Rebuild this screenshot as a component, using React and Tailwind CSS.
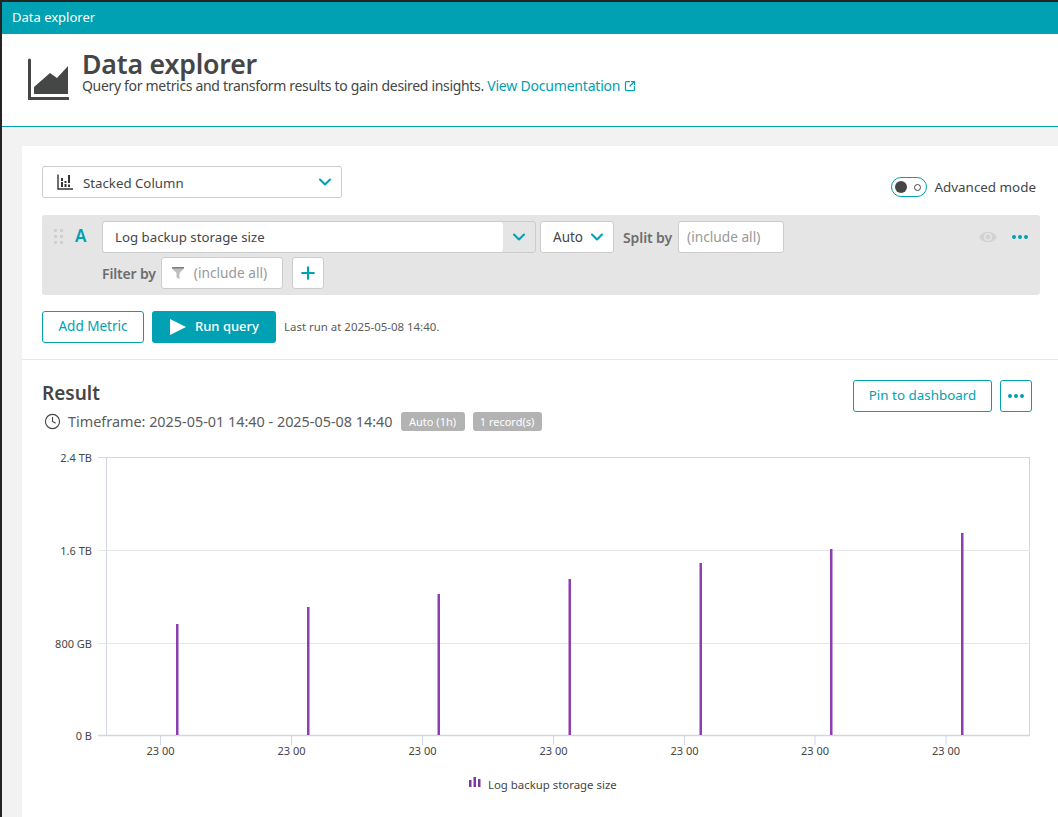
import React from "react";
import { ChevronDown, Clock, Plus, SquareArrowOutUpRight } from "lucide-react";

const bars = [
  { x: 177, top: 624 },
  { x: 308, top: 607 },
  { x: 438.5, top: 594 },
  { x: 569.5, top: 579 },
  { x: 700.5, top: 563 },
  { x: 831, top: 549 },
  { x: 962, top: 533 },
];
const ticks = [160.5, 291.5, 422.5, 553.5, 684.5, 815, 946];
const yLabels = [
  { y: 457.5, label: "2.4 TB" },
  { y: 550.5, label: "1.6 TB" },
  { y: 643.5, label: "800 GB" },
  { y: 735.5, label: "0 B" },
];

const Dots = ({ className }) => (
  <div className={"flex gap-[2px] " + className}>
    <span className="w-1 h-1 rounded-full bg-[#00a1b2]"></span>
    <span className="w-1 h-1 rounded-full bg-[#00a1b2]"></span>
    <span className="w-1 h-1 rounded-full bg-[#00a1b2]"></span>
  </div>
);

const Chart = () => (
  <svg viewBox="22 440 1036 377" className="block w-[1036px] h-[377px]">
    <rect x="106.5" y="457.5" width="923" height="278" fill="none" stroke="#d0d5e8" />
    <line x1="98" x2="1030" y1="457.5" y2="457.5" stroke="#d0d5e8" />
    <line x1="98" x2="1030" y1="550.5" y2="550.5" stroke="#e6e6e6" />
    <line x1="98" x2="1030" y1="643.5" y2="643.5" stroke="#e6e6e6" />
    <line x1="98" x2="1030" y1="735.5" y2="735.5" stroke="#d0d5e8" strokeWidth="1.5" />
    {yLabels.map((t) => (
      <text key={t.label} x="92" y={t.y + 4} textAnchor="end" fontSize="11" fill="#454646">
        {t.label}
      </text>
    ))}
    {ticks.map((x, i) => (
      <g key={i}>
        <line x1={x} x2={x} y1="735" y2="745" stroke="#d0d5e8" />
        <text x={x} y="755" textAnchor="middle" fontSize="11" fill="#454646">
          23 00
        </text>
      </g>
    ))}
    {bars.map((b) => (
      <rect key={b.x} x={b.x - 1} y={b.top} width="2.5" height={735 - b.top} fill="#8b3fb0" />
    ))}
    <rect x="469" y="780" width="2.5" height="7" fill="#7c38a1" />
    <rect x="473.5" y="777" width="2.5" height="10" fill="#7c38a1" />
    <rect x="478" y="779" width="2.5" height="8" fill="#7c38a1" />
    <text x="488" y="789" fontSize="11.4" fill="#454646">
      Log backup storage size
    </text>
  </svg>
);

const App = () => {
  return (
    <div className="w-[1058px] h-[817px] overflow-hidden bg-[#f2f2f2] border-t-2 border-l-2 border-[#242424] text-[#454646] font-['Noto_Sans',sans-serif]">
      <div className="h-8 bg-[#00a1b2] flex items-center pl-[10px] text-[13px] text-white">Data explorer</div>

      <div className="h-[93px] bg-white border-b border-[#00a1b2] flex pl-[25px] pt-[15px]">
        <svg width="42" height="48" viewBox="0 0 42 48" className="mt-[7px]">
          <path d="M2.5 4V42.5H41" fill="none" stroke="#454646" strokeWidth="3" strokeLinecap="round" />
          <path d="M7 38V31L23 17 30 22 41 10V38z" fill="#454646" />
        </svg>
        <div className="ml-[13px]">
          <h1 className="text-[26.7px] leading-[29px] font-semibold tracking-[-0.2px]">Data explorer</h1>
          <p className="text-[14px] leading-[16px] tracking-[-0.32px]">
            Query for metrics and transform results to gain desired insights.{" "}
            <a className="text-[#00a1b2] tracking-[-0.2px]">
              View Documentation
              <SquareArrowOutUpRight className="inline ml-[4px] mb-[2px] w-3 h-3 text-[#00a1b2]" strokeWidth={2.5} />
            </a>
          </p>
        </div>
      </div>

      <div className="pl-[20px] pt-[19px]">
        <div className="bg-white h-[690px]">
          <div className="px-5 pt-5 pb-4 border-b border-[#e6e6e6]">
            <div className="flex justify-between items-start pr-[2px]">
              <div className="w-[300px] h-8 border border-[#cccccc] rounded-[3px] flex items-center pl-[14px] pr-[6px]">
                <svg width="16" height="16" viewBox="0 0 16 16">
                  <path d="M1 0.5V15H16" fill="none" stroke="#333" strokeWidth="1.4" />
                  <path d="M4 4h2v3H4zM4 8h2v5H4zM7.5 7h2v2h-2zM7.5 10h2v3h-2zM11 1h2v8h-2zM11 10.5h2v2.5h-2z" fill="#333" />
                </svg>
                <span className="ml-[10px] pt-[3px] text-[13.25px] flex-1">Stacked Column</span>
                <ChevronDown className="w-5 h-5 text-[#00a1b2]" strokeWidth={2.5} />
              </div>
              <div className="flex items-center mt-[11px]">
                <div className="w-9 h-5 border border-[#00a1b2] rounded-full flex items-center justify-between px-[3px]">
                  <span className="w-3 h-3 rounded-full bg-[#454646]"></span>
                  <span className="w-[7px] h-[7px] mr-[2px] rounded-full border border-[#454646]"></span>
                </div>
                <span className="ml-2 text-[13.4px]">Advanced mode</span>
              </div>
            </div>

            <div className="mt-[17px] h-20 w-[998px] bg-[#e5e5e5] rounded-[3px] pl-[60px] pt-[6px] relative">
              <div className="absolute left-[12px] top-[14px] grid grid-cols-2 gap-[3px]">
                <span className="w-[3px] h-[3px] bg-[#cfcfcf]"></span>
                <span className="w-[3px] h-[3px] bg-[#cfcfcf]"></span>
                <span className="w-[3px] h-[3px] bg-[#cfcfcf]"></span>
                <span className="w-[3px] h-[3px] bg-[#cfcfcf]"></span>
                <span className="w-[3px] h-[3px] bg-[#cfcfcf]"></span>
                <span className="w-[3px] h-[3px] bg-[#cfcfcf]"></span>
              </div>
              <span className="absolute left-[33px] top-[9px] text-[17px] leading-[24px] font-semibold text-[#00a1b2]">A</span>

              <div className="flex items-center h-8">
                <div className="w-[434px] h-8 border border-[#cccccc] rounded-[3px] flex">
                  <div className="flex-1 bg-white rounded-[3px] pl-3 pt-[2px] flex items-center text-[13.25px]">Log backup storage size</div>
                  <div className="w-8 flex items-center justify-center">
                    <ChevronDown className="w-5 h-5 text-[#00a1b2]" strokeWidth={2.5} />
                  </div>
                </div>
                <div className="ml-1 w-[74px] h-8 bg-white border border-[#cccccc] rounded-[3px] flex items-center justify-between pl-3 pr-[6px] text-[13.5px]">
                  <span className="pt-[1px]">Auto</span>
                  <ChevronDown className="w-5 h-5 text-[#00a1b2]" strokeWidth={2.5} />
                </div>
                <span className="ml-[9px] text-[14px] font-semibold text-[#6d6d6d] tracking-[-0.1px]">Split by</span>
                <div className="ml-[6px] w-[106px] h-8 bg-white border border-[#cccccc] rounded-[3px] flex items-center pl-2 text-[13.7px] text-[#999999]">(include all)</div>
                <svg width="18" height="14" viewBox="0 0 18 14" className="ml-auto mr-[15px]">
                  <path d="M0 7C4 0 14 0 18 7C14 14 4 14 0 7z" fill="#d2d2d2" />
                  <circle cx="9" cy="7" r="4" fill="#e5e5e5" />
                  <circle cx="9" cy="7" r="2.5" fill="#d2d2d2" />
                </svg>
                <Dots className="mr-3" />
              </div>

              <div className="flex items-center h-8 mt-1">
                <span className="text-[14px] font-semibold text-[#6d6d6d] tracking-[-0.15px]">Filter by</span>
                <div className="ml-[5px] w-[122px] h-8 bg-white border border-[#cccccc] rounded-[3px] flex items-center pl-[10px] text-[13.7px] text-[#999999]">
                  <svg width="12" height="12" viewBox="0 0 12 12">
                    <path d="M0 0h12v1.5L7.5 6v6L4.5 10.5V6L0 1.5z" fill="#bdbdbd" />
                    <path d="M0 0h12v1.5H0z" fill="#7d7d7d" />
                  </svg>
                  <span className="ml-[10px]">(include all)</span>
                </div>
                <div className="ml-[9px] w-8 h-8 bg-white border border-[#cccccc] rounded-[3px] flex items-center justify-center">
                  <Plus className="w-5 h-5 text-[#00a1b2]" strokeWidth={2.5} />
                </div>
              </div>
            </div>

            <div className="mt-4 flex items-center">
              <button className="w-[102px] h-8 pb-[2px] border border-[#00a1b2] rounded-[3px] text-[13.5px] text-[#00a1b2]">Add Metric</button>
              <button className="ml-2 w-[124px] h-8 bg-[#00a1b2] rounded-[3px] text-[13px] font-medium text-white flex items-center pl-[18px]">
                <svg width="16" height="16" viewBox="0 0 16 16">
                  <path d="M0 0l16 8-16 8z" fill="white" />
                </svg>
                <span className="ml-[9px]">Run query</span>
              </button>
              <span className="ml-2 text-[11.45px] text-[#5c5c5c]">Last run at 2025-05-08 14:40.</span>
            </div>
          </div>

          <div className="px-5 pt-5 h-[80px] flex justify-between items-start pr-[26px]">
            <div>
              <h2 className="text-[19px] leading-[26px] font-semibold">Result</h2>
              <div className="mt-[5px] flex items-center">
                <Clock className="ml-[2px] w-[17px] h-[17px] text-[#454646]" strokeWidth={1.6} />
                <span className="ml-[7px] text-[14.4px] text-[#5c5c5c]">Timeframe: 2025-05-01 14:40 - 2025-05-08 14:40</span>
                <span className="ml-2 w-16 h-[19px] rounded-[3px] bg-[#b3b3b3] text-white text-center text-[11px] leading-[19px]">Auto (1h)</span>
                <span className="ml-2 w-[69px] h-[19px] rounded-[3px] bg-[#b3b3b3] text-white text-center text-[11px] leading-[19px]">1 record(s)</span>
              </div>
            </div>
            <div className="flex">
              <button className="w-[139px] h-8 pb-[2px] border border-[#00a1b2] rounded-[3px] text-[13.4px] text-[#00a1b2]">Pin to dashboard</button>
              <button className="ml-2 w-8 h-8 border border-[#00a1b2] rounded-[3px] flex items-center justify-center">
                <Dots />
              </button>
            </div>
          </div>

          <Chart />
        </div>
      </div>
    </div>
  );
};

export default App;
